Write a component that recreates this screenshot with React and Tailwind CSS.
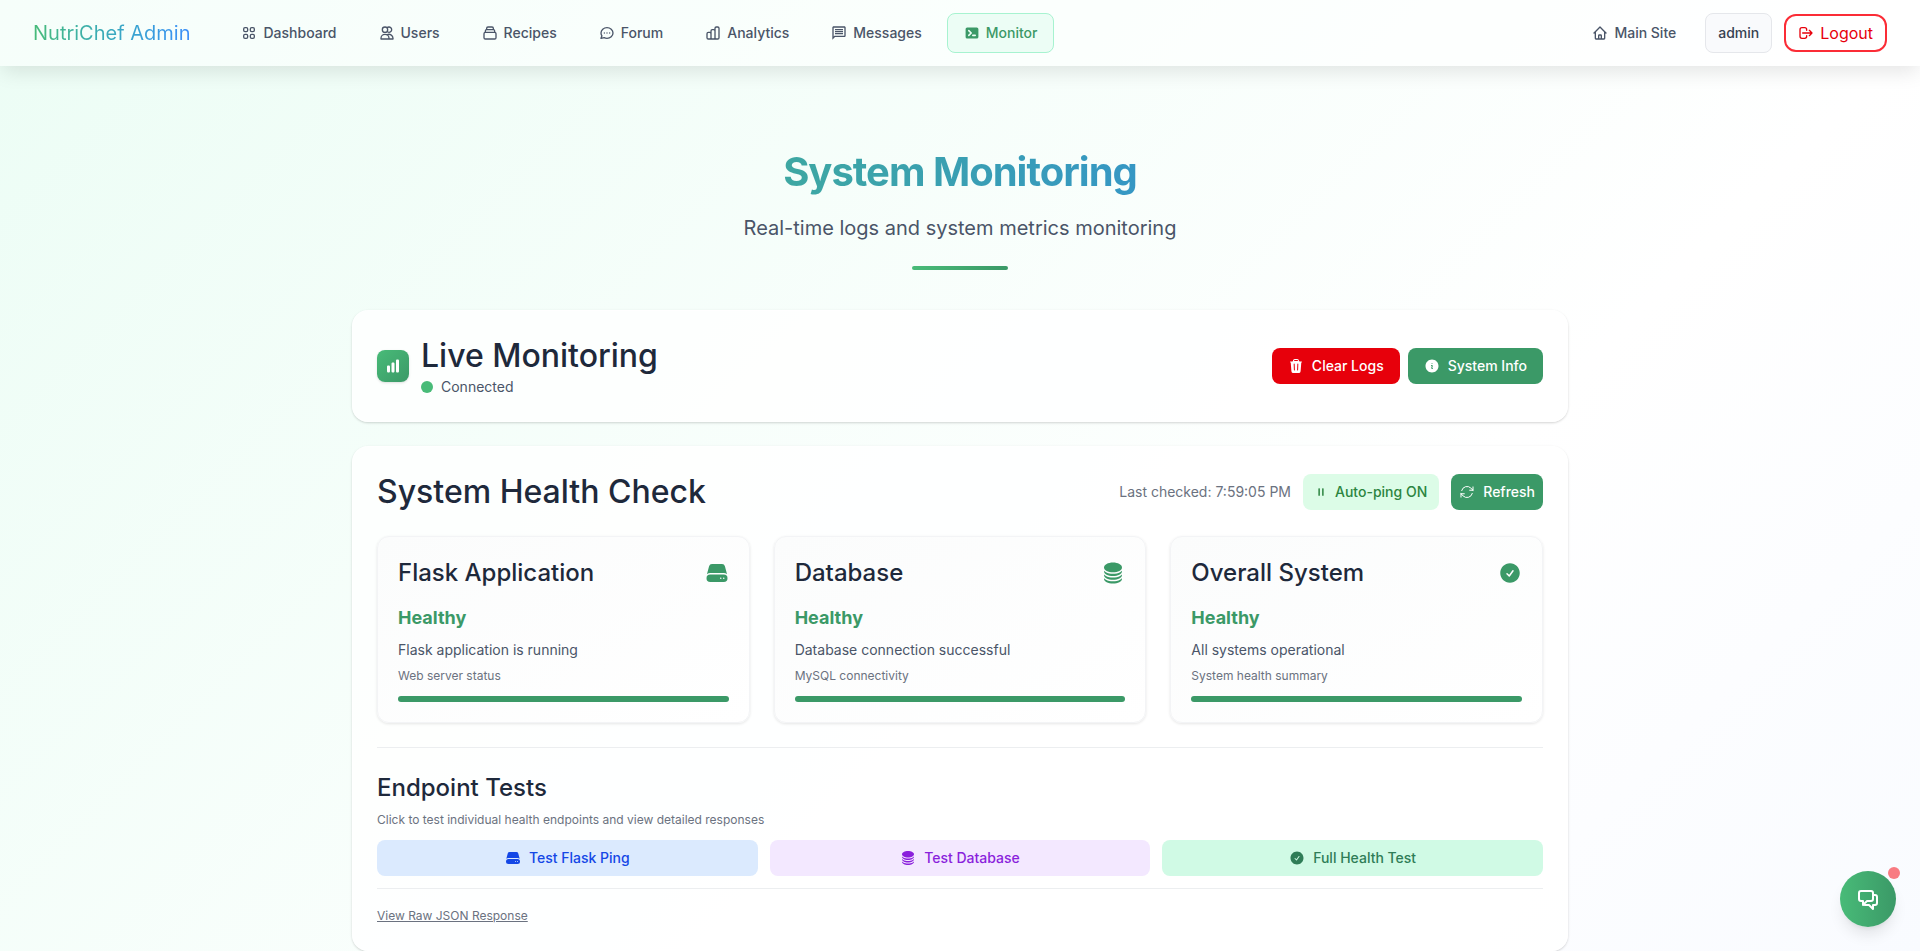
import React from 'react';
import {
  HiOutlineViewGrid, HiOutlineUsers, HiOutlineCollection, HiOutlineChat, HiOutlineChartBar,
  HiOutlineHome, HiOutlineLogout, HiOutlineChatAlt2, HiTerminal,
} from 'react-icons/hi';
import {
  HiCircleStack, HiServer, HiCheckCircle, HiTrash, HiInformationCircle, HiPause, HiOutlineArrowPath, HiChartBar,
} from 'react-icons/hi2';
import { MdOutlineMessage } from 'react-icons/md';

const NAV = [
  { label: 'Dashboard', Icon: HiOutlineViewGrid },
  { label: 'Users', Icon: HiOutlineUsers },
  { label: 'Recipes', Icon: HiOutlineCollection },
  { label: 'Forum', Icon: HiOutlineChat },
  { label: 'Analytics', Icon: HiOutlineChartBar },
  { label: 'Messages', Icon: MdOutlineMessage },
  { label: 'Monitor', Icon: HiTerminal, active: true },
];

const CHECKS = [
  { name: 'Flask Application', Icon: HiServer, message: 'Flask application is running', note: 'Web server status' },
  { name: 'Database', Icon: HiCircleStack, message: 'Database connection successful', note: 'MySQL connectivity' },
  { name: 'Overall System', Icon: HiCheckCircle, message: 'All systems operational', note: 'System health summary' },
];

const TESTS = [
  { label: 'Test Flask Ping', Icon: HiServer, tone: 'bg-[#dbeafe] text-[#1447e6]' },
  { label: 'Test Database', Icon: HiCircleStack, tone: 'bg-[#f3e8ff] text-[#8a1fdc]' },
  { label: 'Full Health Test', Icon: HiCheckCircle, tone: 'bg-[#d0fae5] text-[#2f7d57]' },
];

const navBase = 'flex h-10 items-center gap-1.5 rounded-lg border px-4 text-sm font-medium';

function Navbar() {
  return (
    <header className="relative flex h-[66px] items-center justify-between bg-white/50 px-[33px] shadow-[0_8px_20px_-2px_rgba(0,0,0,0.1)]">
      <div className="flex items-center gap-[34px]">
        <a href="#home" className="bg-gradient-to-r from-[#48bb78] to-[#3d8ffa] bg-clip-text text-xl text-transparent">NutriChef Admin</a>
        <nav className="flex items-center gap-2">
          {NAV.map(({ label, Icon, active }) => (
            <a
              key={label}
              href={'#' + label.toLowerCase()}
              className={navBase + (active ? ' border-[#a7f3d0] bg-[#ecfdf5] text-[#3b9967]' : ' border-transparent text-[#4a5568]')}
            >
              <Icon className="size-4" />
              {label}
            </a>
          ))}
        </nav>
      </div>
      <div className="flex items-center gap-3">
        <a href="#site" className={navBase + ' border-transparent text-[#4a5568]'}>
          <HiOutlineHome className="size-4" />
          Main Site
        </a>
        <span className="flex h-10 items-center rounded-lg border border-[#e5e7eb] bg-[#f9fafc] px-3 text-sm font-medium text-[#374151]">admin</span>
        <button type="button" className="flex h-[38px] items-center gap-1.5 rounded-xl border-2 border-[#fb2c36] px-3 text-base text-[#e7000b]">
          <HiOutlineLogout className="size-4" />
          Logout
        </button>
      </div>
    </header>
  );
}

const panel = 'rounded-2xl border border-white/60 bg-white/80 p-6 shadow-[0_1px_3px_rgba(0,0,0,0.1),0_1px_2px_rgba(0,0,0,0.08)]';
const actionButton = 'flex h-9 items-center justify-center gap-2 rounded-lg text-sm font-medium';
const panelTitle = 'text-[32px] leading-[41px] font-medium';

export default function App() {
  return (
    <div className="min-h-screen bg-[linear-gradient(135deg,#ecfdf5_0%,#ffffff_68%,#f9fbff_100%)] font-['Inter','Liberation_Sans',sans-serif] text-[#1e293b] antialiased">
      <Navbar />
      <main className="mx-auto max-w-[1280px] px-8 pt-20">
        <div className="mb-10 flex flex-col items-center text-center">
          <h1 className="w-full bg-[linear-gradient(to_right,#48bb78,#2b83ee)] bg-clip-text text-[40px] leading-[52px] font-bold tracking-tight text-transparent">System Monitoring</h1>
          <p className="mt-4 text-xl leading-7 text-[#4a5568]">Real-time logs and system metrics monitoring</p>
          <div className="mt-6 h-1 w-24 rounded-full bg-gradient-to-r from-[#48bb78] to-[#3b9967]" />
        </div>

        <section className={panel + ' flex items-center justify-between'}>
          <div className="flex items-center gap-3">
            <div className="flex size-8 items-center justify-center rounded-lg bg-gradient-to-br from-[#48bb78] to-[#3b9967] shadow-sm">
              <HiChartBar className="size-4 text-white" />
            </div>
            <div>
              <h2 className={panelTitle}>Live Monitoring</h2>
              <div className="flex items-center gap-2 text-sm leading-[21px] text-[#4a5568]">
                <span className="size-3 rounded-full bg-[#48bb78]" />
                Connected
              </div>
            </div>
          </div>
          <div className="flex gap-2">
            <button type="button" className={actionButton + ' bg-[#e7000b] px-4 text-white'}>
              <HiTrash className="size-4" />
              Clear Logs
            </button>
            <button type="button" className={actionButton + ' bg-[#3b9967] px-4 text-white'}>
              <HiInformationCircle className="size-4" />
              System Info
            </button>
          </div>
        </section>

        <section className={panel + ' mt-6'}>
          <div className="mb-6 flex items-center justify-between">
            <h2 className={panelTitle}>System Health Check</h2>
            <div className="flex items-center gap-3">
              <span className="text-sm text-[#6b7280]">Last checked: 7:59:05 PM</span>
              <button type="button" className={actionButton + ' bg-[#dcfce7] px-3 text-[#2c8540]'}>
                <HiPause className="size-3" />
                Auto-ping ON
              </button>
              <button type="button" className={actionButton + ' bg-[#3b9967] px-2 text-white'}>
                <HiOutlineArrowPath className="size-4" />
                Refresh
              </button>
            </div>
          </div>

          <div className="grid grid-cols-3 gap-6">
            {CHECKS.map(({ name, Icon, message, note }) => (
              <article key={name} className="rounded-xl border border-[#f3f4f6] bg-gradient-to-br from-[#fbfcfc] to-white p-5 shadow-[0_1px_3px_rgba(0,0,0,0.1)]">
                <div className="mb-4 flex items-center justify-between">
                  <h3 className="text-2xl leading-[31px] font-medium">{name}</h3>
                  <Icon className="size-6 text-[#3b9967]" />
                </div>
                <p className="text-lg leading-[27px] font-bold text-[#3b9967]">Healthy</p>
                <p className="mt-2 text-sm leading-[21px] text-[#4a5568]">{message}</p>
                <p className="mt-2 text-xs text-[#6b7280]">{note}</p>
                <div className="mt-3 h-1.5 rounded-full bg-[#3b9967]" />
              </article>
            ))}
          </div>

          <div className="mt-6 border-t border-[#eceef0] pt-6">
            <h3 className="text-2xl leading-8 font-medium">Endpoint Tests</h3>
            <p className="mt-2 text-xs text-[#6b7280]">Click to test individual health endpoints and view detailed responses</p>
            <div className="mt-3 grid grid-cols-3 gap-3">
              {TESTS.map(({ label, Icon, tone }) => (
                <button key={label} type="button" className={actionButton + ' ' + tone}>
                  <Icon className="size-4" />
                  {label}
                </button>
              ))}
            </div>
          </div>

          <div className="mt-3 border-t border-[#eceef0] pt-4">
            <button type="button" className="block text-xs leading-[21px] text-[#6b7280] underline">View Raw JSON Response</button>
          </div>
        </section>
      </main>

      <button type="button" aria-label="Open chat" className="fixed right-6 bottom-6 flex size-14 items-center justify-center rounded-full bg-gradient-to-r from-[#48bb78] to-[#3b9967] text-white shadow-lg">
        <HiOutlineChatAlt2 className="size-6" />
        <span className="absolute -top-1 -right-1 size-3 rounded-full bg-[#f87b82]" />
      </button>
    </div>
  );
}
